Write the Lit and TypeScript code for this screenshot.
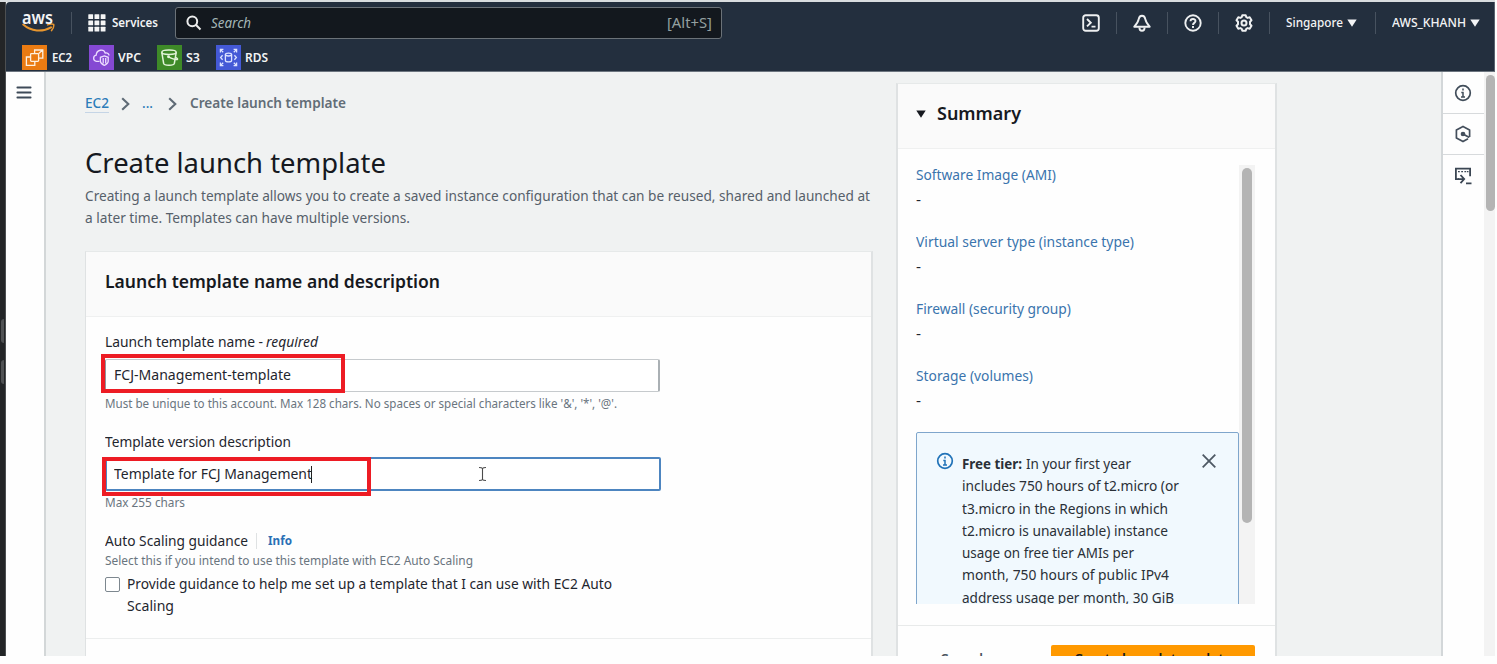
import { LitElement, html, css, svg } from "lit";
import { customElement, property } from "lit/decorators.js";

/** A single line of text condensed or widened to an exact measure. */
@customElement("fit-text")
class FitText extends LitElement {
  @property({ type: Number }) w = 0;
  static styles = css`
    :host { display: block; flex: none; white-space: nowrap; }
    .run { display: inline-block; transform-origin: 0 50%; vertical-align: top; }
  `;
  render() {
    return html`<span class="run"><slot></slot></span>`;
  }
  firstUpdated() {
    const run = this.renderRoot.querySelector(".run") as HTMLElement;
    const natural = run.getBoundingClientRect().width;
    this.style.width = `${this.w}px`;
    if (natural > 0) run.style.transform = `scaleX(${this.w / natural})`;
  }
}

const t = (text: string, w: number, cls = "") =>
  html`<fit-text class=${cls} .w=${w}>${text}</fit-text>`;

const icons = {
  smile: html`<svg class="smile" width="34" height="11" viewBox="0 0 34 11">
    <path d="M1.2 1.600C9 8.600 20.500 9.200 29 4.300" fill="none" stroke="#e8962e" stroke-width="2" stroke-linecap="round"/>
    <path d="M25.600 1.900C28 .8 30.600.8 31.700 1.400C32 3.300 31.200 6 29.500 7.600" fill="none" stroke="#e8962e" stroke-width="1.500" stroke-linecap="round" stroke-linejoin="round"/>
  </svg>`,
  grid: html`<svg width="18" height="18" viewBox="0 0 18 18" fill="#f4f5f5">
    ${[0.3, 6.5, 12.7].map((y) => [0.3, 6.5, 12.7].map((x) => svg`<rect x=${x} y=${y} width="4.800" height="4.800" rx=".5"/>`))}
  </svg>`,
  search: html`<svg width="16" height="16" viewBox="0 0 16 16" fill="none" stroke="#eceded" stroke-width="2">
    <circle cx="6.300" cy="6.300" r="4.900"/><path d="M9.800 9.800l4.700 4.700"/>
  </svg>`,
  shell: html`<svg width="18" height="18" viewBox="0 0 18 18" fill="none" stroke="#eef0f1" stroke-width="1.900">
    <rect x="1.200" y="1.200" width="15.600" height="15.600" rx="2.500"/><path d="M5 5l3.800 3.700L5 12.400M9.500 12.600h4"/>
  </svg>`,
  bell: html`<svg width="18" height="18" viewBox="0 0 18 18" fill="none" stroke="#eef0f1" stroke-width="1.900" stroke-linejoin="round">
    <path d="M9 1.700C6.600 1.700 6 3.200 5.700 5.200C5.200 8.300 3.600 10.200 1.300 12.700H16.700C14.400 10.200 12.800 8.300 12.300 5.200C12 3.200 11.400 1.700 9 1.700Z"/>
    <path d="M6.400 13.500C6.400 17.800 11.600 17.800 11.600 13.500"/>
  </svg>`,
  help: html`<svg width="18" height="18" viewBox="0 0 18 18" fill="none" stroke="#eef0f1" stroke-width="1.900">
    <circle cx="9" cy="9" r="7.700"/><path d="M6.500 7.300C6.500 4.200 11.500 4.200 11.500 7.100C11.500 9 9 8.800 9 11M9 12.100v1.900"/>
  </svg>`,
  gear: html`<svg width="18" height="18" viewBox="0 0 18 18" fill="none" stroke="#eef0f1" stroke-width="2" stroke-linejoin="round">
    <path d="M7.300 1.200h3.400l.6 2 1.300.7 2.100-.6 1.800 2.900-1.500 1.600v2.400l1.500 1.600-1.800 2.900-2.100-.6-1.300.7-.6 2H7.300l-.6-2-1.300-.7-2.100.6L1.500 11.800 3 10.200V7.800L1.500 6.200 3.300 3.300l2.100.6 1.300-.7z"/>
    <circle cx="9" cy="9" r="2.500"/>
  </svg>`,
  caret: html`<svg width="10" height="8" viewBox="0 0 10 8"><path d="M.3.4h9.400L5 7.800z" fill="currentColor"/></svg>`,
  ec2: html`<svg width="25" height="25" viewBox="0 0 25 25" fill="none" stroke="#fdf0e0" stroke-width="1.300">
    <path d="M8.500 12H4.400v8.300h8.400v-4"/><rect x="8.600" y="8.600" width="8" height="7.700" rx=".8"/>
    <path d="M12.600 8.400V5h8.200v8.200h-3.900M16.800 8.400l3.800-3.300"/>
  </svg>`,
  vpc: html`<svg width="25" height="25" viewBox="0 0 25 25" fill="none" stroke="#ecdcff" stroke-width="1.300">
    <path d="M10.500 16.300H7.500C3.600 15.600 3.900 10.800 7.200 10.200C7.400 4.400 14.800 3.500 16.200 8C18.500 7.400 20 9 20 10.400"/>
    <path d="M15.300 10.900l3.900 1.400v4c0 2-1.900 3.200-3.900 4-1.900-.8-3.900-2-3.900-4v-4zM14.200 13v5.600M16.700 13v5.600"/>
  </svg>`,
  s3: html`<svg width="25" height="25" viewBox="0 0 25 25" fill="none" stroke="#e3f5da" stroke-width="1.500">
    <ellipse cx="12" cy="7.200" rx="7.200" ry="2.200"/><path d="M4.800 7.300l1.900 11.200c.3 2.300 10.300 2.300 10.600 0L19.200 7.300M11.500 11.800c3 1.800 8.300 3.600 9 2.500.4-.9-1.500-1.800-2.500-2.200"/><circle cx="11.500" cy="11.800" r=".7"/>
  </svg>`,
  rds: html`<svg width="25" height="25" viewBox="0 0 25 25" fill="none" stroke="#dde3ff" stroke-width="1.300">
    <path d="M4.400 7.400V4.400H7.400M4.600 4.600l2.600 2.600M17.600 4.400h3v3M20.400 4.600l-2.600 2.600M4.400 17.600v3h3M4.600 20.400l2.600-2.600M17.600 20.600h3v-3M20.400 20.400l-2.600-2.600M6.600 10.200l-2 2.300 2 2.300M18.400 10.200l2 2.300-2 2.300"/>
    <ellipse cx="12.500" cy="9.600" rx="3.100" ry="1.400"/><path d="M9.400 9.600v5.800c0 1.900 6.200 1.900 6.200 0V9.600"/>
  </svg>`,
  menu: html`<svg width="16" height="13" viewBox="0 0 16 13" stroke="#3e4a58" stroke-width="1.900" stroke-linecap="round"><path d="M1.400 1.500h13.200M1.400 6.500h13.200M1.400 11.500h13.200"/></svg>`,
  chevron: html`<svg width="9" height="14" viewBox="0 0 9 14" fill="none" stroke="#5f6b76" stroke-width="2.100"><path d="M1.200 1.200L7.300 7l-6.100 5.800"/></svg>`,
  info: html`<svg width="18" height="18" viewBox="0 0 18 18" fill="none" stroke="currentColor" stroke-width="1.700">
    <circle cx="9" cy="9" r="7.300"/><path d="M9 4.600v1.900M9 8v5.200M7.300 8.600H9.600M7 12.900h4" stroke-width="1.500"/>
  </svg>`,
  hex: html`<svg width="18" height="18" viewBox="0 0 18 18" fill="none" stroke="#444f5c" stroke-width="1.700" stroke-linejoin="round">
    <path d="M14 13.800L9 16.600 2.400 13V5L9 1.400 15.600 5v7"/><path d="M9 9l6.300 3.600"/><circle cx="9" cy="9" r="1.500" fill="#444f5c"/>
  </svg>`,
  console: html`<svg width="18" height="18" viewBox="0 0 18 18" fill="none" stroke="#3b4653" stroke-width="1.800">
    <path d="M5 12.100H1.900V1.700h14.200v7.500"/><path d="M4 4.700h1.800M7.200 4.700H9M10.400 4.700h1.800M13 4.700h1.500" stroke-width="1.200"/>
    <path d="M4 12.100h6M6.500 8l3.700 4.100-3.700 4.100M12 16.400h5.500"/>
  </svg>`,
  close: html`<svg width="16" height="16" viewBox="0 0 16 16" stroke="#4e5964" stroke-width="1.800"><path d="M1.700 1.700l12.600 12.600M14.300 1.700L1.700 14.300"/></svg>`,
  ibeam: html`<svg width="9" height="16" viewBox="0 0 9 16" fill="none" stroke="#4b4b4b" stroke-width="1.100"><path d="M1 1.500c2 0 3 .2 3.500 1 .5-.8 1.500-1 3.500-1M4.500 2.500v11M1 14.500c2 0 3-.2 3.500-1 .5.8 1.500 1 3.500 1"/></svg>`,
};

@customElement("app-root")
class AppRoot extends LitElement {
  static styles = css`
    * { box-sizing: border-box; }
    :host {
      display: block; width: 1497px; height: 664px; overflow: hidden; background: #fefefe;
      font: 13.500px/22px "Noto Sans", "Open Sans", sans-serif; color: #1f262e;
    }
    svg { display: block; flex: none; }
    .frame { display: flex; width: 1495px; height: 656px; border-top: 2px solid #d9dddf; }
    .edge { width: 6px; flex: none; background: #232527; border-right: 1px solid #4c4f51; padding-top: 317px; }
    .tab { width: 3px; height: 24px; margin: 0 0 17px 1px; background: #505254; border-radius: 3px 0 0 3px; }
    .window { flex: 1; min-width: 0; display: flex; flex-direction: column; background: #f0f2f2; }

    .top { height: 70px; flex: none; background: #232f3e; border-bottom: 1px solid #6c757f; border-right: 1px solid #59636f; color: #f3f4f5; border-top-left-radius: 4px; }
    .bar { display: flex; align-items: center; height: 42px; padding: 0 14px 0 16px; font-size: 12.500px; }
    .logo { width: 34px; height: 24px; }
    .aws { font-size: 18px; font-weight: 600; line-height: 16px; height: 14px; margin-top: -2px; }
    .sep { width: 1px; height: 22px; background: #47525f; flex: none; }
    .logo + .sep { margin: 0 16px 0 15px; }
    .services { font-weight: 600; margin: 0 17px 0 6px; }
    .find { display: flex; align-items: center; width: 547px; height: 32px; padding: 0 9px 0 10px; background: #13181e; border: 1.500px solid #6b7278; border-radius: 3px; }
    .ph { font-style: italic; color: #a3b6b6; font-size: 13.500px; margin-left: 9px; }
    .key { margin-left: auto; color: #94a0a0; font-size: 14px; }
    .tools { margin-left: auto; display: flex; align-items: center; font-weight: 500; }
    .tools svg { margin: 0 16px; }
    .menu { display: flex; align-items: center; padding-left: 16px; }
    .menu svg { margin: 0 0 0 4px; }
    .menu.region { margin-right: 18px; }
    .favs { display: flex; gap: 16px; height: 26px; padding: 1px 0 0 16px; font-size: 12.500px; font-weight: 600; }
    .fav { display: flex; align-items: center; gap: 4px; height: 25px; }
    .fav:first-child { gap: 5px; margin-right: 1px; }
    .tile { width: 25px; height: 25px; }
    .tile.ec2 { background: #ea7b12; } .tile.vpc { background: #8549d3; }
    .tile.s3 { background: #3e8a28; } .tile.rds { background: #4459d6; }

    .body { flex: 1; min-height: 0; display: flex; overflow: hidden; }
    .nav { width: 40px; flex: none; background: #fefefe; border-right: 2px solid #d3d7d8; padding: 14px 0 0 10px; }
    .page { flex: 1; min-width: 0; display: flex; padding-left: 39px; gap: 25px; }
    .main { width: 788px; flex: none; display: flex; flex-direction: column; padding-top: 20px; }
    .crumbs { display: flex; align-items: center; height: 22px; color: #626d77; font-weight: 600; font-size: 13.500px; }
    .link { color: #2b7cb9; }
    .crumbs .link { font-weight: 500; }
    .ec2link { border-bottom: 1.500px solid #c5d5e6; line-height: 18px; }
    .crumbs svg { margin: 1px 12px 0 12px; }
    .dots + svg { margin: 1px 13px 0 15px; }
    .h1 { font-size: 26.500px; line-height: 34px; margin: 32px 0 5px; color: #16191f; }
    .intro { color: #56606a; line-height: 22px; }
    .card { margin-top: 22px; height: 500px; flex: none; background: #fefefe; border-left: 1px solid #dfe2e3; border-right: 2px solid #dfe2e3; border-top: 1px solid #e6e9e9; }
    .head { height: 65px; display: flex; align-items: center; padding: 0 19px 4px; background: #fafafa; border-bottom: 1px solid #eff0f0; font-weight: 600; font-size: 17px; color: #16191f; }
    .form { padding: 14px 0 21px 19px; border-bottom: 1px solid #eceeee; position: relative; }
    .row { display: flex; }
    .em { font-style: italic; margin-left: 3px; }
    .input { width: 555px; height: 33px; margin-top: 6px; padding-left: 8px; background: #fff; border: 1px solid #c6cacd; border-left-color: #8f979d; border-right: 2px solid #aab0b4; border-radius: 2px; line-height: 31px; display: flex; align-items: center; }
    .input.focus { width: 556px; margin-top: 4px; height: 34px; border: 2px solid #4d85c0; padding-left: 7px; }
    .caret { width: 1px; height: 17px; background: #222; margin-left: -1px; }
    .input .ibeam { margin-left: 166px; }
    .hint { font-size: 12px; line-height: 18px; margin-top: 3px; color: #6a757e; }
    .label2 { margin-top: 18px; }
    .asg { margin-top: 18px; align-items: center; }
    .asg .bar1 { width: 1px; height: 16px; background: #dfe2e3; margin: 0 11px 0 8px; }
    .info { font-weight: 700; font-size: 12px; color: #2a70b5; }
    .hint.tight { margin-top: 0; }
    .check { margin-top: 3px; gap: 7px; }
    .box { width: 15px; height: 15px; margin-top: 4px; border: 1.500px solid #7d878f; border-radius: 2px; background: #fff; }
    .mark { position: absolute; border: 4px solid #ed1c24; }
    .mark.one { left: 15px; top: 37px; width: 244px; height: 39px; }
    .mark.two { left: 16px; top: 140px; width: 269px; height: 39px; }

    .side { width: 381px; height: 600px; flex: none; margin: 11px 0 0 -2px; background: #fefefe; border-left: 2px solid #dfe2e3; border-right: 2px solid #dfe2e3; border-top: 1px solid #e6e9e9; }
    .side .head { padding: 0 18px 5px; color: #16191f; }
    .side .head svg { margin-right: 11px; margin-top: 1px; }
    .scroll { display: flex; height: 439px; margin: 16px 20px 0 18px; overflow: hidden; line-height: 20px; }
    .list { width: 323px; flex: none; }
    .list .link { color: #3a74ad; margin-bottom: 5px; }
    .pair { margin-bottom: 22px; }
    .pair:nth-child(4) { margin-bottom: 21px; }
    .alert { height: 220px; display: flex; padding: 20px 21px 0 19px; background: #f1f9fe; border: 1.500px solid #7fa6cc; border-radius: 2px; line-height: 22.300px; color: #2a3037; }
    .alert .ico { color: #2173b8; margin: -1px 8px 0 0; }
    .alert .x { margin-left: auto; }
    .b { font-weight: 700; margin-right: 4px; }
    .track { width: 16px; background: #f3f3f3; padding: 3px 3px 0; }
    .thumb { width: 10px; height: 355px; border-radius: 5px; background: #b4b4b4; }
    .foot { display: flex; justify-content: space-between; margin-top: 21px; border-top: 1px solid #e8eaea; padding: 19px 20px 0 42px; font-weight: 600; }
    .cancel { margin-top: 3px; color: #4a545e; }
    .primary { width: 204px; height: 34px; padding: 3px 23px; background: #ff9900; border-radius: 2px; color: #16191f; }

    .rail { width: 43px; flex: none; background: #fefefe; border-left: 2px solid #d3d7d9; color: #414d5a; }
    .cell { height: 41px; display: flex; align-items: center; justify-content: center; border-bottom: 1px solid #d7dadc; padding-right: 2px; }
    .cell:first-child { height: 42px; padding-top: 1px; }
    .cell:last-child { border: 0; }
    .vscroll { width: 11px; flex: none; background: #f3f3f3; padding: 3px 0 0 2px; }
    .vthumb { height: 136px; background: #b4b4b4; border-radius: 5px; }
  `;

  private fav(name: "ec2" | "vpc" | "s3" | "rds", label: string, w: number) {
    return html`<div class="fav"><div class="tile ${name}">${icons[name]}</div>${t(label, w)}</div>`;
  }

  private pair(label: string, w: number) {
    return html`<div class="pair">${t(label, w, "link")}${t("-", 5)}</div>`;
  }

  render() {
    return html`<div class="frame">
      <div class="edge"><div class="tab"></div><div class="tab"></div></div>
      <div class="window">
        <header class="top">
          <div class="bar">
            <div class="logo">${t("aws", 31, "aws")}${icons.smile}</div>
            <div class="sep"></div>
            ${icons.grid}${t("Services", 46, "services")}
            <div class="find">${icons.search}${t("Search", 40, "ph")}${t("[Alt+S]", 45, "key")}</div>
            <div class="tools">
              ${icons.shell}<div class="sep"></div>${icons.bell}<div class="sep"></div>
              ${icons.help}<div class="sep"></div>${icons.gear}<div class="sep"></div>
              <div class="menu region">${t("Singapore", 57)}${icons.caret}</div>
              <div class="sep"></div>
              <div class="menu">${t("AWS_KHANH", 74)}${icons.caret}</div>
            </div>
          </div>
          <div class="favs">
            ${this.fav("ec2", "EC2", 20)}${this.fav("vpc", "VPC", 23)}${this.fav("s3", "S3", 14)}${this.fav("rds", "RDS", 23)}
          </div>
        </header>
        <div class="body">
          <nav class="nav">${icons.menu}</nav>
          <div class="page">
            <main class="main">
              <div class="crumbs">
                ${t("EC2", 24, "link ec2link")}${icons.chevron}${t("...", 11, "link dots")}${icons.chevron}${t("Create launch template", 156)}
              </div>
              ${t("Create launch template", 301, "h1")}
              ${t("Creating a launch template allows you to create a saved instance configuration that can be reused, shared and launched at", 785, "intro")}
              ${t("a later time. Templates can have multiple versions.", 325, "intro")}
              <section class="card">
                <div class="head">${t("Launch template name and description", 335)}</div>
                <div class="form">
                  <div class="row">${t("Launch template name -", 158)}${t("required", 52, "em")}</div>
                  <div class="input">${t("FCJ-Management-template", 177)}</div>
                  ${t("Must be unique to this account. Max 128 chars. No spaces or special characters like '&', '*', '@'.", 512, "hint")}
                  ${t("Template version description", 186, "label2")}
                  <div class="input focus">${t("Template for FCJ Management", 198)}<div class="caret"></div><div class="ibeam">${icons.ibeam}</div></div>
                  ${t("Max 255 chars", 80, "hint")}
                  <div class="row asg">${t("Auto Scaling guidance", 143)}<div class="bar1"></div>${t("Info", 24, "info")}</div>
                  ${t("Select this if you intend to use this template with EC2 Auto Scaling", 368, "hint tight")}
                  <div class="row check"><div class="box"></div><div>
                    ${t("Provide guidance to help me set up a template that I can use with EC2 Auto", 485)}
                    ${t("Scaling", 47)}
                  </div></div>
                  <div class="mark one"></div><div class="mark two"></div>
                </div>
              </section>
            </main>
            <aside class="side">
              <div class="head">${icons.caret}${t("Summary", 84)}</div>
              <div class="scroll">
                <div class="list">
                  ${this.pair("Software Image (AMI)", 140)}
                  ${this.pair("Virtual server type (instance type)", 218)}
                  ${this.pair("Firewall (security group)", 155)}
                  ${this.pair("Storage (volumes)", 117)}
                  <div class="alert">
                    <div class="ico">${icons.info}</div>
                    <div>
                      <div class="row">${t("Free tier:", 60, "b")}${t("In your first year", 105)}</div>
                      ${t("includes 750 hours of t2.micro (or", 217)}
                      ${t("t3.micro in the Regions in which", 206)}
                      ${t("t2.micro is unavailable) instance", 206)}
                      ${t("usage on free tier AMIs per", 172)}
                      ${t("month, 750 hours of public IPv4", 207)}
                      ${t("address usage per month, 30 GiB", 212)}
                    </div>
                    <div class="x">${icons.close}</div>
                  </div>
                </div>
                <div class="track"><div class="thumb"></div></div>
              </div>
              <div class="foot">${t("Cancel", 43, "cancel")}<div class="primary">${t("Create launch template", 158)}</div></div>
            </aside>
          </div>
          <div class="rail">
            <div class="cell">${icons.info}</div><div class="cell">${icons.hex}</div><div class="cell">${icons.console}</div>
          </div>
          <div class="vscroll"><div class="vthumb"></div></div>
        </div>
      </div>
    </div>`;
  }
}
